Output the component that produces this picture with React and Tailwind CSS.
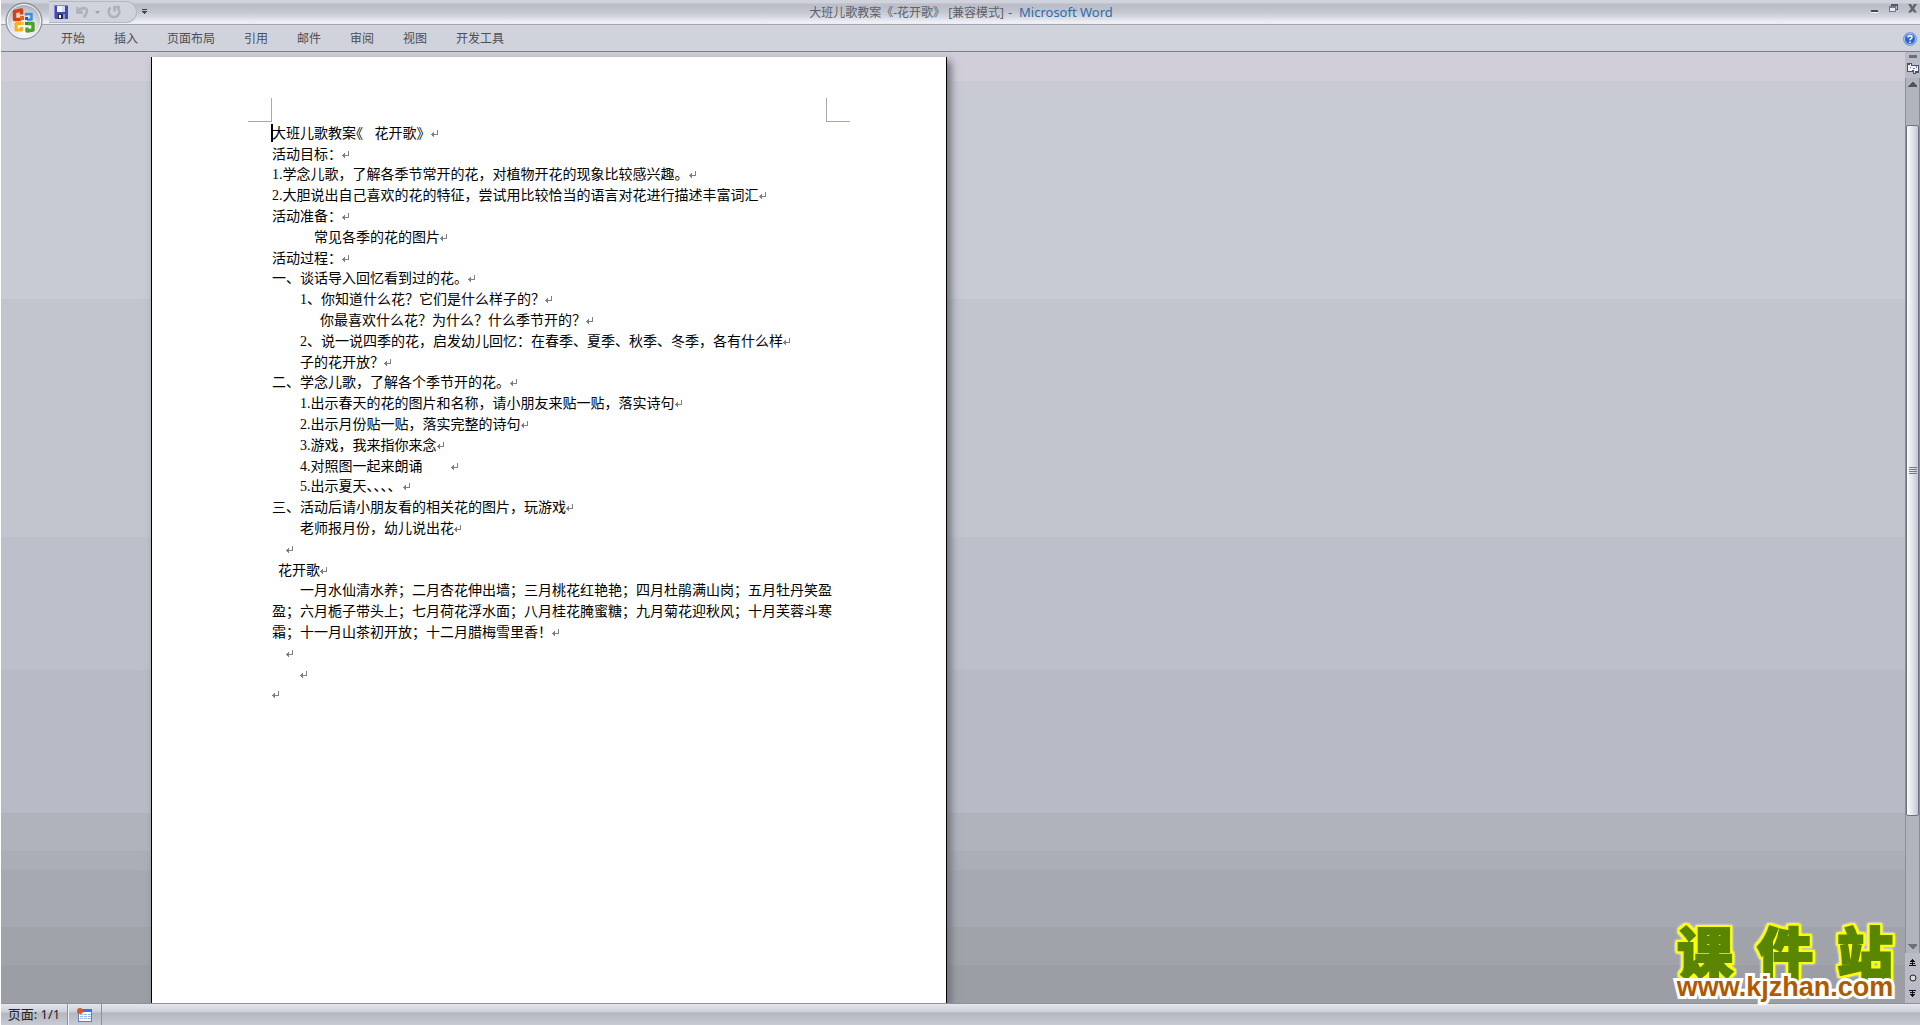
import clsx from 'clsx'

const tabs = ['开始', '插入', '页面布局', '引用', '邮件', '审阅', '视图', '开发工具']

const lines = [
  { text: <>大班儿歌教案<Half className="pr-2">《</Half> 花开歌》</> },
  { text: '活动目标：', short: true },
  { text: '1.学念儿歌，了解各季节常开的花，对植物开花的现象比较感兴趣。' },
  { text: '2.大胆说出自己喜欢的花的特征，尝试用比较恰当的语言对花进行描述丰富词汇' },
  { text: '活动准备：' },
  { text: '常见各季的花的图片', indent: 'pl-[42px]' },
  { text: '活动过程：', short: true },
  { text: '一、谈话导入回忆看到过的花。' },
  { text: '1、你知道什么花？它们是什么样子的？', indent: 'pl-7' },
  { text: '你最喜欢什么花？为什么？什么季节开的？', indent: 'pl-12' },
  { text: '2、说一说四季的花，启发幼儿回忆：在春季、夏季、秋季、冬季，各有什么样', indent: 'pl-7' },
  { text: '子的花开放？', indent: 'pl-7', short: true },
  { text: '二、学念儿歌，了解各个季节开的花。' },
  { text: '1.出示春天的花的图片和名称，请小朋友来贴一贴，落实诗句', indent: 'pl-7' },
  { text: '2.出示月份贴一贴，落实完整的诗句', indent: 'pl-7' },
  { text: '3.游戏，我来指你来念', indent: 'pl-7' },
  { text: <span className="pr-7">4.对照图一起来朗诵</span>, indent: 'pl-7', short: true },
  { text: <>5.出示夏天<Half className="pr-2">、、、、</Half></>, indent: 'pl-7' },
  { text: '三、活动后请小朋友看的相关花的图片，玩游戏' },
  { text: '老师报月份，幼儿说出花', indent: 'pl-7' },
  { text: '', indent: 'pl-[14px]' },
  { text: '花开歌', indent: 'pl-1.5', short: true },
  { text: '一月水仙清水养；二月杏花伸出墙；三月桃花红艳艳；四月杜鹃满山岗；五月牡丹笑盈', indent: 'pl-7', wrapped: true },
  { text: '盈；六月栀子带头上；七月荷花浮水面；八月桂花腌蜜糖；九月菊花迎秋风；十月芙蓉斗寒', wrapped: true },
  { text: '霜；十一月山茶初开放；十二月腊梅雪里香！' },
  { text: '', indent: 'pl-[14px]' },
  { text: '', indent: 'pl-7', short: true },
  { text: '' },
]

// half-width form of full-width punctuation
function Half({ children, className }) {
  return <span className={clsx("[font-feature-settings:'halt']", className)}>{children}</span>
}

function ReturnMark() {
  return (
    <svg className="inline-block h-2 w-2 align-baseline" viewBox="0 0 8 8" shapeRendering="crispEdges">
      <path d="M6 0h1v5H0V4h6zM1 3h1v3H1zM2 2h1v5H2z" fill="#808080" />
    </svg>
  )
}

function OfficeButton() {
  return (
    <button type="button" aria-label="Office" className="absolute left-1 top-0.5 z-10 h-[38px] w-[38px]">
      <svg viewBox="0 0 38 38" className="h-full w-full">
        <defs>
          <radialGradient id="orb" cx="50%" cy="75%" r="75%">
            <stop offset="0" stopColor="#ffffff" />
            <stop offset="0.5" stopColor="#e0e1e6" />
            <stop offset="1" stopColor="#a3a7b2" />
          </radialGradient>
        </defs>
        <circle cx="19" cy="19" r="18" fill="url(#orb)" stroke="#80848e" />
        <circle cx="19" cy="19" r="16.5" fill="none" stroke="#f6f7f9" />
        <g fill="none" strokeLinejoin="round">
          <path d="M16 17.500H9.500v-8l7-1.500v4.500" stroke="#d9400f" strokeWidth="3.400" />
          <path d="M21 13.500v-1.500h5.500v5.500H22" stroke="#3a8fd8" strokeWidth="2.600" />
          <path d="M16 21.500h-5V28h5.500v-3" stroke="#f5b117" strokeWidth="3" />
          <path d="M22 21.500h6V28l-6 1v-3.500" stroke="#4f9f2e" strokeWidth="3.400" />
        </g>
        <path d="M15 14h4v4h-4z" fill="#e8641a" />
        <path d="M20 15h3v3h-3z" fill="#1d62b5" />
        <path d="M16 20h3v3h-3z" fill="#f7c53a" />
        <path d="M20 20h3v3h-3z" fill="#3d8a24" />
      </svg>
    </button>
  )
}

function QuickAccess() {
  return (
    <div className="ml-12 flex items-center">
      <div className="flex h-[22px] w-[88px] items-center rounded-r-full border border-l-0 border-[#b4b8c2] bg-[#d0d3dc] pl-[5px]">
        <button type="button" aria-label="保存">
          <svg className="h-[14px] w-[14px]" viewBox="0 0 14 14" shapeRendering="crispEdges">
            <path d="M0 0h14v14H1l-1-1z" fill="#4349b4" />
            <path d="M0 0h14v1H0zM0 0h1v13H0z" fill="#7f86dc" />
            <path d="M3 1h8v6H3z" fill="#f2f5fc" />
            <path d="M8 1h3v6H8z" fill="#cfdaf2" />
            <path d="M4 9h7v5H4z" fill="#23264f" />
            <path d="M5 10h2v3H5z" fill="#ffffff" />
            <path d="M9 9h2v5H9z" fill="#8e95c9" />
          </svg>
        </button>
        <button type="button" aria-label="撤消" className="ml-2">
          <svg className="h-[14px] w-[14px]" viewBox="0 0 14 14">
            <path d="M1.500 2v5.500H7M2 7c3-5 9-5 9-1 0 3-2 4-3 6.500" fill="none" stroke="#aeb2bc" strokeWidth="2.600" />
          </svg>
        </button>
        <svg className="ml-1 h-[5px] w-[7px]" viewBox="0 0 7 5"><path d="M1 1h5L3.500 4z" fill="#9da1ab" /></svg>
        <button type="button" aria-label="恢复" className="ml-1.5">
          <svg className="h-[14px] w-[14px]" viewBox="0 0 14 14">
            <path d="M3.500 2.500C0 6 2 12 7 12s7-6 3.500-9M7.500 6.500V2H13" fill="none" stroke="#aeb2bc" strokeWidth="2.600" />
          </svg>
        </button>
      </div>
      <button type="button" aria-label="自定义快速访问工具栏" className="ml-[5px]">
        <svg className="h-[7px] w-[5px]" viewBox="0 0 5 7" shapeRendering="crispEdges">
          <path d="M0 0h5v1H0zM0 2h5v1H0zM1 3h3v1H1zM2 4h1v1H2z" fill="#3c4048" />
        </svg>
      </button>
    </div>
  )
}

function WindowControls() {
  return (
    <div className="flex flex-1 items-start justify-end gap-2.5 pr-[3px] pt-1">
      <button type="button" aria-label="最小化">
        <svg className="h-[9px] w-2" viewBox="0 0 8 9" shapeRendering="crispEdges">
          <path d="M0 6h7v2H0z" fill="#45484e" /><path d="M0 8h7v1H0z" fill="#f4f5f8" />
        </svg>
      </button>
      <button type="button" aria-label="还原">
        <svg className="h-[9px] w-[9px]" viewBox="0 0 9 9" shapeRendering="crispEdges">
          <path d="M2 0h7v6H7V5h1V2H2z" fill="#55585f" />
          <path d="M0 2h7v6H0z" fill="#6c7a92" /><path d="M1 4h5v3H1z" fill="#e8ebf2" />
        </svg>
      </button>
      <button type="button" aria-label="关闭">
        <svg className="h-[9px] w-[9px]" viewBox="0 0 9 9">
          <path d="M0 0h3l1.500 2.500L6 0h3L6 4.500 9 8.500H6L4.500 6.500 3 8.500H0l3-4z" fill="#5d6470" />
        </svg>
      </button>
    </div>
  )
}

function Scrollbar() {
  return (
    <div className="flex w-[15px] flex-col items-center bg-[#b9bcc6]">
      <div className="mt-[3px] h-[3px] w-2 bg-[#6b6e75]" />
      <button type="button" aria-label="标尺" className="my-1">
        <svg className="h-3 w-3" viewBox="0 0 12 12" shapeRendering="crispEdges">
          <path d="M0 1h5v2h7v8H9v1H6v-2H0z" fill="#3f5573" />
          <path d="M1 3h2V2h1v2h7v5H8v2H7V8H5v1H1z" fill="#f6eef8" />
          <path d="M3 5h1v1H3zM6 6h2v1H6zM9 4h1v2H9z" fill="#6b7d98" />
        </svg>
      </button>
      <div className="flex w-full flex-1 flex-col items-center border-x border-[#8b8e96] bg-[#b1b4bd]">
        <button type="button" aria-label="向上" className="mt-1">
          <svg className="h-[5px] w-[9px]" viewBox="0 0 9 5" shapeRendering="crispEdges"><path d="M4 0h1l4 4v1H0V4z" fill="#50545d" /></svg>
        </button>
        <div className="mt-[38px] flex h-[79%] w-full items-center justify-center rounded-xs border border-[#6f727a] bg-linear-to-r from-[#fffdf0] via-[#dfe4f0] to-[#c3c7d1]">
          <svg className="h-2 w-2" viewBox="0 0 8 8" shapeRendering="crispEdges">
            <path d="M0 0h8v1H0zM0 2h8v1H0zM0 4h8v1H0zM0 6h8v1H0z" fill="#757982" />
          </svg>
        </div>
        <button type="button" aria-label="向下" className="mb-1 mt-auto">
          <svg className="h-[5px] w-[9px]" viewBox="0 0 9 5" shapeRendering="crispEdges"><path d="M0 0h9v1L5 5H4L0 1z" fill="#6c707a" /></svg>
        </button>
      </div>
      <div className="flex w-full flex-col items-center gap-2 py-1.5">
        <button type="button" aria-label="上一页">
          <svg className="h-[7px] w-[7px]" viewBox="0 0 7 7" shapeRendering="crispEdges"><path d="M3 0h1v1h1v1h1v1H4v1h2v1H4v1h3v1H0V6h3V5H1V4h2V3H1V2h1V1h1z" fill="#111" /></svg>
        </button>
        <button type="button" aria-label="选择浏览对象">
          <svg className="h-2 w-2" viewBox="0 0 8 8"><circle cx="4" cy="4" r="3" fill="#d9dad6" stroke="#222" /></svg>
        </button>
        <button type="button" aria-label="下一页">
          <svg className="h-[7px] w-[7px]" viewBox="0 0 7 7" shapeRendering="crispEdges"><path d="M0 0h7v1H4v1h2v1H4v1h2v1H5v1H4v1H3V6H2V5H1V4h2V3H1V2h2V1H0z" fill="#111" /></svg>
        </button>
      </div>
    </div>
  )
}

function Watermark() {
  return (
    <div className="absolute bottom-1 right-[21px] z-10 w-[228px] font-['Liberation_Sans','Noto_Sans_CJK_SC',sans-serif]">
      <div className="flex justify-between px-1.5 text-[56px] font-black leading-10 text-[#5a8500] [-webkit-text-stroke:2px_#5a8500] [filter:drop-shadow(2px_0_0_#ff0)_drop-shadow(-2px_0_0_#ff0)_drop-shadow(0_2px_0_#ff0)_drop-shadow(0_-2px_0_#ff0)_drop-shadow(0_0_1px_#fff)]">
        <span>课</span><span>件</span><span>站</span>
      </div>
      <a
        href="#"
        className="relative block text-center text-[27px] font-bold leading-6 text-[#b05a00] [paint-order:stroke_fill] [-webkit-text-stroke:6px_#fff]"
      >
        www.kjzhan.com
      </a>
    </div>
  )
}

export default function App() {
  return (
    <div className="flex h-screen flex-col overflow-hidden border-l border-white bg-[#d0d3dc] font-['Noto_Sans','Noto_Sans_CJK_SC',sans-serif] text-xs text-[#4a4e57]">
      <header className="relative">
        <OfficeButton />
        <div className="flex h-[25px] border-b border-[#a3a6b0] bg-[linear-gradient(#d0d3dc_0_12%,#bcbfc9_16%_30%,#c3c7d0_50%,#d5d8e0_70%,#eceef4_90%)]">
          <div className="flex flex-1"><QuickAccess /></div>
          <h1 className="flex items-center whitespace-pre pl-1 pt-0.5 text-[#5c616b]">
            大班儿歌教案《-花开歌》 [兼容模式]<span className="ml-1 text-[13px] text-[#2f6ca8]">-  Microsoft Word</span>
          </h1>
          <WindowControls />
        </div>
        <nav className="flex h-[27px] items-center gap-[29px] border-b border-[#7b7f88] pl-[60px] pr-[3px] pt-0.5">
          {tabs.map((tab) => <button key={tab} type="button">{tab}</button>)}
          <button type="button" aria-label="帮助" className="ml-auto">
            <svg className="h-[14px] w-[14px]" viewBox="0 0 14 14">
              <circle cx="7" cy="7" r="6.500" fill="#2c63cf" stroke="#7fa3dd" />
              <circle cx="7" cy="7" r="5.500" fill="none" stroke="#d5e4fb" strokeWidth="0.800" />
              <path d="M5 5.500C5 3 9 3 9 5.300 9 6.800 7 6.600 7 8.300M7 9.500v1.500" fill="none" stroke="#fff" strokeWidth="1.600" />
            </svg>
          </button>
        </nav>
      </header>

      <div className="relative flex min-h-0 flex-1">
        <main className="flex min-w-0 flex-1 overflow-hidden bg-[linear-gradient(#d2ced9_0_3%,#c8cad4_3%_26%,#c2c5ce_26%_51%,#bdc0ca_51%_65%,#b8bbc5_65%_80%,#b0b3bc_80%_84%,#abaeb7_84%_86%,#a6a9b1_86%_92%,#a0a4aa_92%_96%,#9b9fa5_96%)] pl-[150px] pt-[5px]">
          <article className="w-[796px] shrink-0 border-x border-black bg-white pt-[41px] shadow-[4px_4px_8px_#6b7077]">
            <div className="flex h-6 justify-between px-24">
              <span className="w-6 border-b border-r border-[#a6a9b3]" />
              <span className="w-6 border-b border-l border-[#a6a9b3]" />
            </div>
            <div className="relative pl-[120px] pt-px font-['Liberation_Serif','Noto_Sans_CJK_SC',serif] text-sm leading-[21px] text-black">
              <span className="absolute left-[119px] top-0.5 h-[18px] w-0.5 bg-black" />
              {lines.map((line, i) => (
                <p key={i} className={clsx('whitespace-nowrap', line.short ? 'h-5' : 'h-[21px]', line.indent)}>
                  {line.text}
                  {!line.wrapped && <ReturnMark />}
                </p>
              ))}
            </div>
          </article>
        </main>
        <Scrollbar />
        <Watermark />
      </div>

      <footer className="flex h-[22px] border-t border-[#8e9199] bg-[linear-gradient(#e4e6ec,#ced1da_35%,#b4b7c0_45%,#c8cbd4)] text-[#222]">
        <button type="button" className="w-[67px] border-r border-[#8e9199] pb-0.5 text-[13px] leading-[18px]">页面: 1/1</button>
        <button type="button" aria-label="宏" className="flex w-[34px] items-center justify-center border-x border-l-[#eceef3] border-r-[#8e9199]">
          <svg className="h-[14px] w-4" viewBox="0 0 16 14" shapeRendering="crispEdges">
            <path d="M1 1h14v13H1z" fill="#5f7fb8" />
            <path d="M2 4h12v9H2z" fill="#fff" />
            <path d="M5 1h10v3H5z" fill="#3f6fdc" />
            <path d="M3 6h3v1H3zM7 6h3v1H7zM11 6h3v1h-3zM3 8h3v1H3zM7 8h3v1H7zM11 8h3v1h-3zM3 10h3v1H3zM7 10h3v1H7zM11 10h3v1h-3z" fill="#9bb4e0" />
            <circle cx="3" cy="3" r="3" fill="#d9542b" shapeRendering="auto" />
          </svg>
        </button>
      </footer>
    </div>
  )
}
